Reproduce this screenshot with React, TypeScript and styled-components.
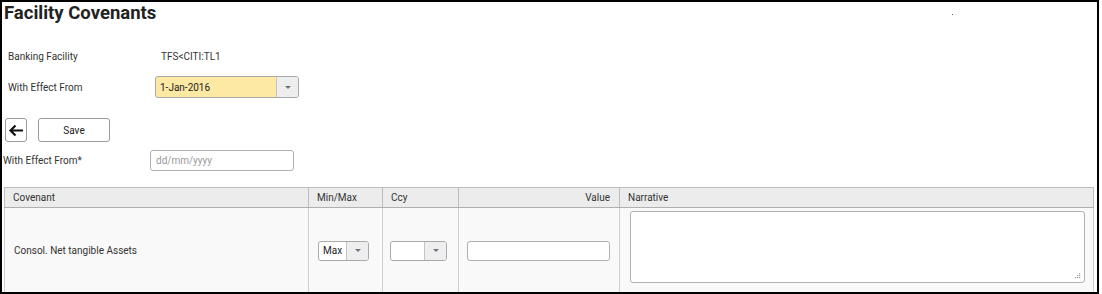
import React from 'react';
import styled, { createGlobalStyle } from 'styled-components';

const GlobalStyle = createGlobalStyle`
  html, body {
    margin: 0;
    padding: 0;
    background: #ffffff;
  }
  body {
    font-family: Roboto, 'Liberation Sans', Arial, sans-serif;
    font-size: 10px;
    color: #333333;
  }
  * {
    box-sizing: border-box;
  }
`;

const Frame = styled.div`
  position: relative;
  width: 1099px;
  height: 294px;
  border: 2px solid #000000;
  padding: 0 3px 0 0;
  overflow: hidden;
  background: #ffffff;
`;

const Title = styled.h1`
  margin: 0;
  height: 24px;
  padding-left: 2px;
  font-size: 18.5px;
  line-height: 22px;
  font-weight: 700;
  color: #222222;
`;

const Speck = styled.span`
  position: absolute;
  left: 950px;
  top: 12px;
  width: 1px;
  height: 1px;
  background: #555555;
`;

const InfoGrid = styled.div`
  display: grid;
  grid-template-columns: 147px auto;
  grid-auto-rows: 26px;
  row-gap: 5px;
  margin-top: 17px;
  padding-left: 6px;
  align-items: center;
`;

const Label = styled.div`
  color: #333333;
`;

const Value = styled.div`
  padding-left: 6px;
  color: #333333;
`;

const Select = styled.div<{ $width: number; $yellow?: boolean }>`
  display: flex;
  width: ${(p) => p.$width}px;
  height: ${(p) => (p.$yellow ? 22 : 20)}px;
  border: 1px solid #a9a9a9;
  border-radius: 3px;
  background: ${(p) => (p.$yellow ? '#fde9a3' : '#ffffff')};
  overflow: hidden;
`;

const SelectText = styled.div`
  flex: 1;
  display: flex;
  align-items: center;
  padding-left: 4px;
  color: #222222;
`;

const SelectButton = styled.div<{ $width: number }>`
  width: ${(p) => p.$width}px;
  display: flex;
  align-items: center;
  justify-content: center;
  background: #eeeeee;
  border-left: 1px solid #c4c4c4;

  &::after {
    content: '';
    border-left: 3px solid transparent;
    border-right: 3px solid transparent;
    border-top: 3px solid #6a7480;
  }
`;

const Toolbar = styled.div`
  display: flex;
  gap: 11px;
  margin-top: 18px;
  padding-left: 3px;
`;

const Button = styled.button<{ $width: number }>`
  width: ${(p) => p.$width}px;
  height: 24px;
  padding: 0;
  display: flex;
  align-items: center;
  justify-content: center;
  border: 1px solid #9a9a9a;
  border-radius: 3px;
  background: #ffffff;
  font-family: inherit;
  font-size: 10px;
  color: #222222;
`;

const DateRow = styled.div`
  display: flex;
  align-items: center;
  margin-top: 8px;
  padding-left: 1px;
`;

const DateLabel = styled.div`
  width: 147px;
  color: #333333;
`;

const TextInput = styled.input<{ $width: number; $height: number }>`
  width: ${(p) => p.$width}px;
  height: ${(p) => p.$height}px;
  border: 1px solid #b0b0b0;
  border-radius: 3px;
  padding: 0 5px;
  background: #ffffff;
  font-family: inherit;
  font-size: 10px;
  color: #333333;
  outline: none;

  &::placeholder {
    color: #9a9a9a;
  }
`;

const Table = styled.table`
  margin-top: 16px;
  margin-left: 2px;
  width: 1089px;
  table-layout: fixed;
  border-collapse: collapse;
  border: 1px solid #b3b3b3;
`;

const Th = styled.th<{ $right?: boolean }>`
  height: 20px;
  padding: 0 ${(p) => (p.$right ? '9px' : '0')} 0 ${(p) => (p.$right ? '0' : '8px')};
  background: #ececec;
  border: 1px solid #bdbdbd;
  border-bottom-color: #b0b0b0;
  text-align: ${(p) => (p.$right ? 'right' : 'left')};
  font-weight: 400;
  color: #333333;
`;

const Td = styled.td<{ $top?: boolean; $pad?: number }>`
  height: 86px;
  padding: ${(p) => (p.$top ? '3px 9px 0 10px' : `0 0 0 ${p.$pad ?? 9}px`)};
  background: #f9f9f9;
  border-left: 1px solid #cfcfcf;
  border-right: 1px solid #cfcfcf;
  vertical-align: ${(p) => (p.$top ? 'top' : 'middle')};
  color: #333333;
`;

const NarrativeBox = styled.div`
  position: relative;
  width: 455px;
  height: 72px;
`;

const TextArea = styled.textarea`
  display: block;
  width: 100%;
  height: 100%;
  border: 1px solid #b0b0b0;
  border-radius: 3px;
  background: #ffffff;
  resize: none;
  outline: none;
`;

const Grip = styled.svg`
  position: absolute;
  right: 4px;
  bottom: 4px;
`;

const ArrowIcon = () => (
  <svg width="16" height="13" viewBox="0 0 16 13">
    <path d="M15 6.5H2.5M7.5 1.5l-5 5 5 5" fill="none" stroke="#111" strokeWidth="2.2" />
  </svg>
);

const App: React.FC = () => {
  return (
    <>
      <GlobalStyle />
      <Frame>
        <Title>Facility Covenants</Title>
        <Speck />
        <InfoGrid>
          <Label>Banking Facility</Label>
          <Value>TFS&lt;CITI:TL1</Value>
          <Label>With Effect From</Label>
          <Select $width={144} $yellow>
            <SelectText>1-Jan-2016</SelectText>
            <SelectButton $width={22} />
          </Select>
        </InfoGrid>

        <Toolbar>
          <Button $width={22} aria-label="Back">
            <ArrowIcon />
          </Button>
          <Button $width={72}>Save</Button>
        </Toolbar>

        <DateRow>
          <DateLabel>With Effect From*</DateLabel>
          <TextInput $width={144} $height={21} placeholder="dd/mm/yyyy" />
        </DateRow>

        <Table>
          <colgroup>
            <col style={{ width: 304 }} />
            <col style={{ width: 74 }} />
            <col style={{ width: 76 }} />
            <col style={{ width: 161 }} />
            <col style={{ width: 474 }} />
          </colgroup>
          <thead>
            <tr>
              <Th>Covenant</Th>
              <Th>Min/Max</Th>
              <Th>Ccy</Th>
              <Th $right>Value</Th>
              <Th>Narrative</Th>
            </tr>
          </thead>
          <tbody>
            <tr>
              <Td $pad={9}>Consol. Net tangible Assets</Td>
              <Td $pad={9}>
                <Select $width={51}>
                  <SelectText>Max</SelectText>
                  <SelectButton $width={22} />
                </Select>
              </Td>
              <Td $pad={7}>
                <Select $width={57}>
                  <SelectText />
                  <SelectButton $width={22} />
                </Select>
              </Td>
              <Td $pad={8}>
                <TextInput $width={143} $height={20} />
              </Td>
              <Td $top>
                <NarrativeBox>
                  <TextArea />
                  <Grip width="7" height="7" viewBox="0 0 7 7">
                    <rect x="5" y="1" width="1.2" height="1.2" fill="#9a9a9a" />
                    <rect x="3" y="3" width="1.2" height="1.2" fill="#9a9a9a" />
                    <rect x="5" y="3" width="1.2" height="1.2" fill="#9a9a9a" />
                    <rect x="1" y="5" width="1.2" height="1.2" fill="#9a9a9a" />
                    <rect x="3" y="5" width="1.2" height="1.2" fill="#9a9a9a" />
                    <rect x="5" y="5" width="1.2" height="1.2" fill="#9a9a9a" />
                  </Grip>
                </NarrativeBox>
              </Td>
            </tr>
          </tbody>
        </Table>
      </Frame>
    </>
  );
};

export default App;
